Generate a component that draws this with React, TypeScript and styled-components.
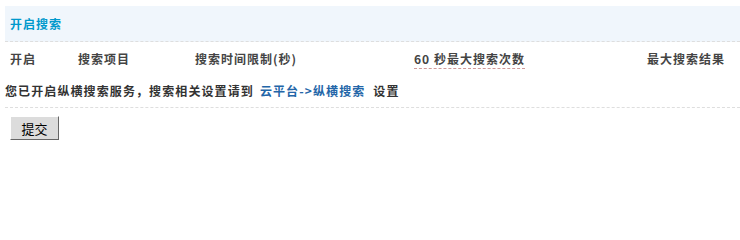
import React from "react";
import styled, { createGlobalStyle } from "styled-components";

const Global = createGlobalStyle`
  html, body { margin: 0; padding: 0; background: #fff; }
  body { font: 12px "Noto Sans CJK SC", "Liberation Sans", sans-serif; color: #333; }
`;

const Page = styled.div`
  padding: 6px 0 0 5px;
`;

const Table = styled.div`
  width: 735px;
  display: flex;
  flex-direction: column;
`;

const TitleBar = styled.div`
  height: 35px;
  display: flex;
  align-items: center;
  padding-left: 5px;
  background: #f0f6fc;
  border-bottom: 1px dashed #dedede;
`;

const Title = styled.h3`
  margin: 0;
  font-size: 12px;
  font-weight: 700;
  letter-spacing: 1px;
  color: #09c;
`;

const HeaderRow = styled.div`
  height: 32px;
  display: grid;
  grid-template-columns: 68px 117px 219px 233px 1fr;
  align-items: center;
`;

const HeadCell = styled.div`
  padding-left: 5px;
  font-weight: 700;
  letter-spacing: 1px;
  color: #444;
  white-space: nowrap;
`;

const Hint = styled.span`
  border-bottom: 1px dashed #d09a9a;
  padding-bottom: 1px;
`;

const InfoRow = styled.div`
  height: 33px;
  display: flex;
  align-items: center;
  border-bottom: 1px dashed #dedede;
  font-weight: 700;
  letter-spacing: 1.1px;
  color: #333;
  white-space: nowrap;
`;

const Link = styled.a`
  color: #2366a8;
  text-decoration: none;
  margin: 0 8px 0 6px;
`;

const ButtonRow = styled.div`
  padding: 8px 0 0 5px;
`;

const SubmitButton = styled.button`
  width: 49px;
  height: 24px;
  padding: 0;
  background: #dcdcdc;
  border: 1px solid;
  border-color: #fff #666 #666 #fff;
  font: 13px "Noto Sans CJK SC", "Liberation Sans", sans-serif;
  color: #000;
  cursor: pointer;
`;

export default function App() {
  return (
    <Page>
      <Global />
      <Table>
        <TitleBar>
          <Title>开启搜索</Title>
        </TitleBar>
        <HeaderRow>
          <HeadCell>开启</HeadCell>
          <HeadCell>搜索项目</HeadCell>
          <HeadCell>搜索时间限制(秒)</HeadCell>
          <HeadCell>
            <Hint>60 秒最大搜索次数</Hint>
          </HeadCell>
          <HeadCell>最大搜索结果</HeadCell>
        </HeaderRow>
        <InfoRow>
          您已开启纵横搜索服务，搜索相关设置请到
          <Link href="#">云平台-&gt;纵横搜索</Link>
          设置
        </InfoRow>
        <ButtonRow>
          <SubmitButton type="button">提交</SubmitButton>
        </ButtonRow>
      </Table>
    </Page>
  );
}
